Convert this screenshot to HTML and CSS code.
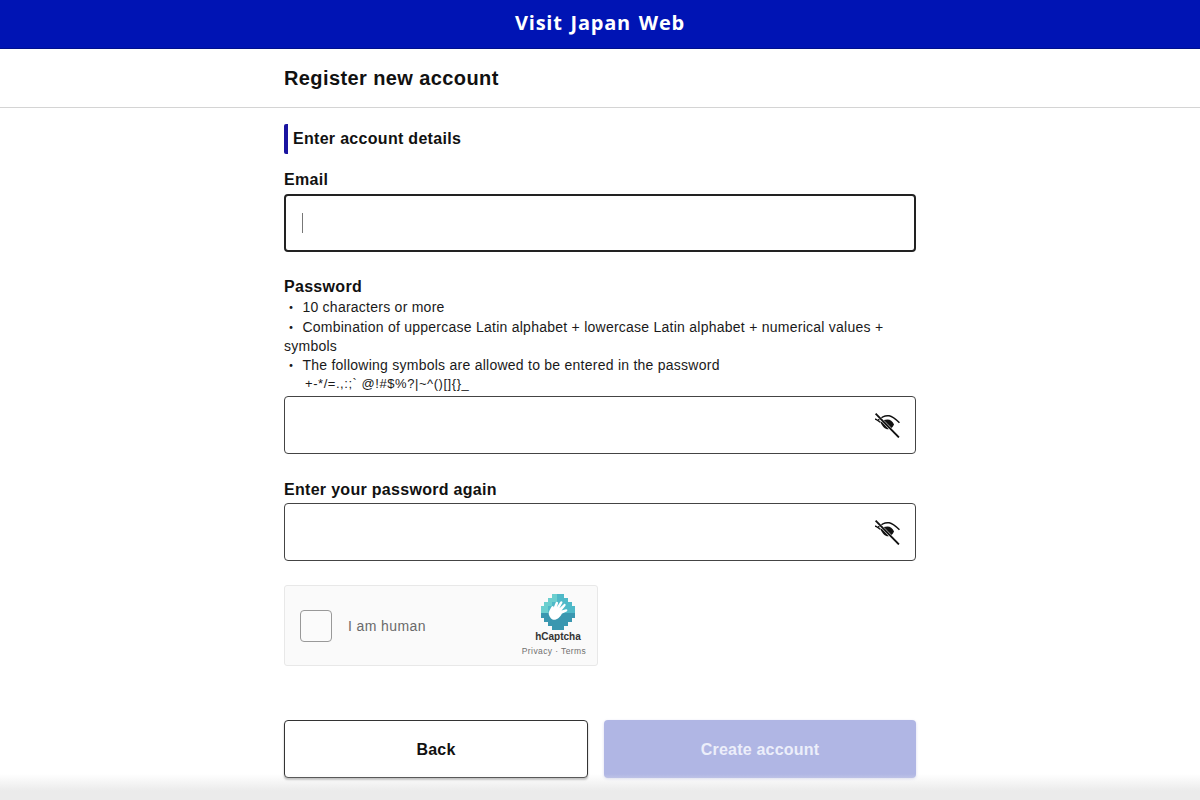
FILE: index.html
```html
<!DOCTYPE html>
<html lang="en">
<head>
<meta charset="utf-8">
<title>Register new account</title>
<link rel="stylesheet" href="styles.css">
</head>
<body>
<header class="brand"><span class="brand-text">Visit Japan Web</span></header>
<div class="title-bar"><h1 class="title">Register new account</h1></div>
<main class="content">
  <h2 class="section"><span class="section-text">Enter account details</span></h2>
  <label class="label label-email">Email</label>
  <div class="field field-focus"><span class="caret"></span></div>
  <label class="label label-pass">Password</label>
  <div class="rules">
    <p class="rule rule-a">・ 10 characters or more</p>
    <p class="rule rule-b">・ Combination of uppercase Latin alphabet + lowercase Latin alphabet + numerical values + symbols</p>
    <p class="rule rule-c">・ The following symbols are allowed to be entered in the password</p>
    <p class="rule rule-d">+-*/=.,:;` @!#$%?|~^()[]{}_</p>
  </div>
  <div class="field">
    <svg class="eye" viewBox="0 0 24 24" aria-hidden="true"><path d="M4 7.500C8 3.500 11 3 14 3.500S20 6.500 23.500 10" fill="none" stroke="#111" stroke-width="1.400"/><path d="M1 6.500C3 7 4 8.500 6 9.500" fill="none" stroke="#111" stroke-width="1.400"/><path d="M6 10C8 7.500 10 7 12.500 7S17 8.500 18.500 11.500C17 14.500 15 16 13 16C10 16 8 13.500 6 10Z" fill="#111"/><path d="M1.500 1.500L22.500 23" stroke="#fff" stroke-width="2.600"/><path d="M1.500 1.500L23 23.500" stroke="#111" stroke-width="1.700"/></svg>
  </div>
  <label class="label label-again">Enter your password again</label>
  <div class="field">
    <svg class="eye" viewBox="0 0 24 24" aria-hidden="true"><path d="M4 7.500C8 3.500 11 3 14 3.500S20 6.500 23.500 10" fill="none" stroke="#111" stroke-width="1.400"/><path d="M1 6.500C3 7 4 8.500 6 9.500" fill="none" stroke="#111" stroke-width="1.400"/><path d="M6 10C8 7.500 10 7 12.500 7S17 8.500 18.500 11.500C17 14.500 15 16 13 16C10 16 8 13.500 6 10Z" fill="#111"/><path d="M1.500 1.500L22.500 23" stroke="#fff" stroke-width="2.600"/><path d="M1.500 1.500L23 23.500" stroke="#111" stroke-width="1.700"/></svg>
  </div>
  <div class="captcha">
    <span class="check"></span>
    <span class="human">I am human</span>
    <div class="hc">
      <svg class="hc-logo" viewBox="0 0 34 36" aria-hidden="true">
        <path d="M11 0h12v4h4v4h4v4h3v12h-3v4h-4v4h-4v4H11v-4H7v-4H3v-4H0V12h3V8h4V4h4z" fill="#4fb9c8"/>
        <path d="M0 19h34v5h-3v4h-4v4h-4v4H11v-4H7v-4H3v-4H0z" fill="#3a97b0"/>
        <path d="M0 12h3V8h4V4h4V0h5v8h-5v4H7v7H0z" fill="#6ccfcf"/>
        <path d="M10 24.500C7.500 21.500 7 19 8.500 16.500L10.500 12.800C11.500 11.200 13.200 12.200 12.600 13.800L14.700 8.600C15.500 7 17.500 7.800 17 9.500L15.800 13.200 19.300 7.800C20.300 6.500 22.100 7.500 21.300 9.100L18.400 14.300 22.800 10.200C24 9.200 25.400 10.600 24.300 11.900L20.500 16.500 25 15.300C26.400 15 27 16.700 25.600 17.400L20.800 19.800C19 24 13.500 28 10 24.500Z" fill="#fff"/>
      </svg>
      <span class="hc-name">hCaptcha</span>
      <span class="hc-links">Privacy · Terms</span>
    </div>
  </div>
  <div class="actions">
    <button class="btn btn-back" type="button">Back</button>
    <button class="btn btn-create" type="button">Create account</button>
  </div>
</main>
<div class="fade"></div>
</body>
</html>
```
FILE: styles.css
```css
* { box-sizing: border-box; }
html, body { margin: 0; padding: 0; }
body {
  height: 800px;
  overflow: hidden;
  background: #fff;
  color: #111;
  font-family: "Liberation Sans", "Noto Sans CJK JP", Arial, sans-serif;
  position: relative;
}
.brand {
  height: 49px;
  background: #0014b4;
  border-bottom: 1px solid #00108c;
  display: flex;
  align-items: center;
  justify-content: center;
}
.brand-text {
  color: #fff;
  font-family: "Open Sans", sans-serif;
  font-weight: 700;
  font-size: 20px;
  letter-spacing: .75px;
  word-spacing: 2px;
  position: relative;
  top: -2px;
}
.title-bar {
  height: 59px;
  border-bottom: 1px solid #d4d4d4;
  width: 100%;
  display: flex;
  align-items: center;
  padding-left: 284px;
}
.title { margin: 0; font-size: 20px; font-weight: 700; letter-spacing: .4px; }
.content { width: 632px; margin: 0 auto; display: flex; flex-direction: column; }
.section {
  margin: 16px 0 0;
  height: 30px;
  border-left: 4px solid #1a14a0;
  border-radius: 2px;
  padding-left: 5px;
  display: flex;
  align-items: center;
  font-size: 16px;
  font-weight: 700;
  letter-spacing: .3px;
}
.label { font-weight: 700; font-size: 16px; line-height: 20px; display: block; letter-spacing: .3px; }
.label-email { margin-top: 16px; height: 24px; }
.field {
  height: 58px;
  border: 1px solid #444;
  border-radius: 4px;
  background: #fff;
  display: flex;
  align-items: center;
  justify-content: flex-end;
  padding-right: 16px;
}
.field-focus { border: 2px solid #222; justify-content: flex-start; padding-left: 16px; }
.caret { width: 1px; height: 20px; background: #777; }
.label-pass { margin-top: 25px; height: 20px; }
.label-again { margin-top: 26px; height: 23px; }
.rules { font-size: 14px; line-height: 18px; color: #1a1a1a; letter-spacing: .25px; }
.rule { margin: 0; }
.rule-a { margin-top: 1px; height: 20px; }
.rule-b { line-height: 19px; }
.rule-c { height: 19px; }
.rule-d { padding-left: 21px; font-size: 13px; height: 13px; line-height: 17px; letter-spacing: .55px; margin-bottom: 8px; }
.eye { width: 26px; height: 26px; margin-right: -1px; }
.captcha {
  margin-top: 24px;
  width: 314px;
  height: 81px;
  background: #fafafa;
  border: 1px solid #e8e8e8;
  border-radius: 3px;
  display: flex;
  align-items: center;
  padding: 0 10px 0 15px;
}
.check { width: 32px; height: 32px; border: 1.500px solid #999; border-radius: 4px; background: #fbfbfb; flex: none; }
.human { margin-left: 16px; color: #6a6a6a; font-size: 14px; letter-spacing: .4px; flex: 1; }
.hc { display: flex; flex-direction: column; align-items: center; width: 66px; }
.hc-logo { width: 34px; height: 36px; margin-left: 8px; }
.hc-name { font-size: 10px; font-weight: 700; color: #333; margin-left: 8px; line-height: 13px; }
.hc-links { font-size: 8.500px; color: #707070; letter-spacing: .4px; margin-top: 3px; line-height: 11px; white-space: nowrap; }
.actions { margin-top: 54px; display: grid; grid-template-columns: 304px 312px; column-gap: 16px; }
.btn {
  height: 58px;
  padding-top: 2px;
  border-radius: 4px;
  font: 700 16px "Liberation Sans", Arial, sans-serif;
  letter-spacing: .2px;
}
.btn-back { background: #fff; color: #111; border: 1px solid #333; box-shadow: 0 2px 2px rgba(0,0,0,.3); }
.btn-create { background: #b0b6e4; color: #eceefa; border: 0; box-shadow: 0 1px 3px rgba(60,70,180,.2); }
.fade {
  position: absolute;
  left: 0;
  right: 0;
  bottom: 0;
  height: 26px;
  background: linear-gradient(to bottom, rgba(236,236,236,0), #ebebeb 65%);
  pointer-events: none;
}
```
